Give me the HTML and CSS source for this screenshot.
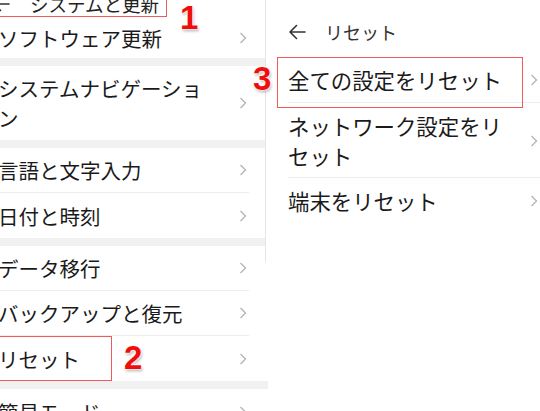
FILE: index.html
```html
<!DOCTYPE html>
<html lang="ja">
<head>
    <meta charset="UTF-8">
    <meta name="viewport" content="width=device-width, initial-scale=1.0">
    <title>リセット</title>
    <link rel="stylesheet" href="styles.css">
</head>
<body>

<div class="pantalla">
    <div class="izquierda">
        <div class="cabecera-izq">
            <svg class="flecha" width="18" height="16" viewBox="0 0 18 16"><path d="M17 8H2M8.5 1.5L2 8l6.5 6.5"/></svg>
            <span>システムと更新</span>
        </div>
        <span class="num num-1">1</span>

        <div class="item primero"><span class="label">ソフトウェア更新</span><svg class="chev" width="8" height="14" viewBox="0 0 8 14"><path d="M1.5 2l5 5-5 5"/></svg></div>
        <div class="separador"></div>
        <div class="item doble"><span class="label">システムナビゲーション</span><svg class="chev" width="8" height="14" viewBox="0 0 8 14"><path d="M1.5 2l5 5-5 5"/></svg></div>
        <div class="separador"></div>
        <div class="item linea"><span class="label">言語と文字入力</span><svg class="chev" width="8" height="14" viewBox="0 0 8 14"><path d="M1.5 2l5 5-5 5"/></svg></div>
        <div class="item"><span class="label">日付と時刻</span><svg class="chev" width="8" height="14" viewBox="0 0 8 14"><path d="M1.5 2l5 5-5 5"/></svg></div>
        <div class="separador"></div>
        <div class="item linea"><span class="label">データ移行</span><svg class="chev" width="8" height="14" viewBox="0 0 8 14"><path d="M1.5 2l5 5-5 5"/></svg></div>
        <div class="item linea"><span class="label">バックアップと復元</span><svg class="chev" width="8" height="14" viewBox="0 0 8 14"><path d="M1.5 2l5 5-5 5"/></svg></div>
        <div class="item">
            <span class="label">リセット</span><svg class="chev" width="8" height="14" viewBox="0 0 8 14"><path d="M1.5 2l5 5-5 5"/></svg>
            <div class="caja caja-2"></div>
            <span class="num num-2">2</span>
        </div>
        <div class="separador"></div>
        <div class="item"><span class="label">簡易モード</span><svg class="chev" width="8" height="14" viewBox="0 0 8 14"><path d="M1.5 2l5 5-5 5"/></svg></div>
    </div>

    <div class="derecha">
        <div class="cabecera-der">
            <svg class="flecha" width="18" height="16" viewBox="0 0 18 16"><path d="M17 8H2M8.5 1.5L2 8l6.5 6.5"/></svg>
            <span>リセット</span>
        </div>
        <div class="fila"><span class="label">全ての設定をリセット</span><svg class="chev" width="8" height="14" viewBox="0 0 8 14"><path d="M1.5 2l5 5-5 5"/></svg></div>
        <div class="fila doble"><span class="label">ネットワーク設定をリセット</span><svg class="chev" width="8" height="14" viewBox="0 0 8 14"><path d="M1.5 2l5 5-5 5"/></svg></div>
        <div class="fila sin-linea"><span class="label">端末をリセット</span><svg class="chev" width="8" height="14" viewBox="0 0 8 14"><path d="M1.5 2l5 5-5 5"/></svg></div>

        <div class="caja caja-3"></div>
        <span class="num num-3">3</span>
    </div>
</div>

</body>
</html>
```

FILE: styles.css
```css
* {
    box-sizing: border-box;
}
body {
    margin: 0;
    width: 540px;
    height: 411px;
    overflow: hidden;
    background: #fff;
    font-family: "Noto Sans CJK JP", "Noto Sans", sans-serif;
    color: #1a1a1a;
}
.pantalla {
    display: flex;
    align-items: flex-start;
}
.flecha {
    flex-shrink: 0;
    fill: none;
    stroke: #333;
    stroke-width: 1.6;
    stroke-linecap: round;
    stroke-linejoin: round;
}
.chev {
    flex-shrink: 0;
    fill: none;
    stroke: #b4b4b4;
    stroke-width: 1.3;
}

/* panel izquierdo */
.izquierda {
    width: 268px;
    flex-shrink: 0;
    position: relative;
}
.cabecera-izq {
    display: flex;
    align-items: center;
    width: 168px;
    height: 34px;
    margin: -17px 0 0 -1px;
    padding-top: 8px;
    border: 1px solid #f05a5a;
    font-size: 18.5px;
    color: #222;
}
.cabecera-izq .flecha {
    margin-left: -8px;
    margin-right: 20px;
}
.item {
    display: flex;
    align-items: center;
    justify-content: space-between;
    width: 249px;
    height: 45px;
    padding-right: 2px;
    font-size: 20.5px;
    position: relative;
}
.item.primero {
    height: 41px;
}
.item .label {
    margin-left: -2px;
    max-width: 215px;
}
.item.doble {
    height: 74px;
    line-height: 30px;
}
.item.linea {
    border-bottom: 1px solid #ececec;
}
.separador {
    height: 8px;
    background: #f1f1f1;
}

/* panel derecho */
.derecha {
    width: 275px;
    height: 262px;
    margin-left: -3px;
    padding-left: 22px;
    padding-right: 2px;
    background: #fff;
    border-left: 1px solid #e6e6e6;
    position: relative;
    flex-shrink: 0;
}
.cabecera-der {
    display: flex;
    align-items: center;
    height: 57px;
    padding-top: 7px;
    font-size: 18px;
    color: #333;
}
.cabecera-der .flecha {
    margin-right: 19px;
}
.fila {
    display: flex;
    align-items: center;
    justify-content: space-between;
    height: 46px;
    margin-right: -2px;
    padding-right: 2px;
    font-size: 21.4px;
    border-bottom: 1px solid #ececec;
}
.fila .label {
    max-width: 225px;
}
.fila.doble {
    height: 75px;
    line-height: 30px;
    padding-top: 8px;
    padding-bottom: 7px;
}
.fila.sin-linea {
    border-bottom: none;
    height: 45px;
}

/* anotaciones */
.caja {
    position: absolute;
    border: 1px solid #f05a5a;
}
.caja-2 {
    left: -2px;
    top: 0;
    width: 114px;
    height: 45px;
}
.caja-3 {
    left: 11px;
    top: 57px;
    width: 246px;
    height: 51px;
}
.num {
    position: absolute;
    font-family: "Liberation Sans", Arial, sans-serif;
    font-weight: bold;
    font-size: 33px;
    line-height: 1.1;
    color: #f20d0d;
    text-shadow: 0 0 2px #fff, 0 0 2px #fff, 0 0 3px #fff, 1px 2px 3px rgba(0, 0, 0, 0.35);
}
.num-1 {
    left: 180px;
    top: 0;
}
.num-2 {
    left: 124px;
    top: 4px;
}
.num-3 {
    left: -13px;
    top: 61px;
}
```
